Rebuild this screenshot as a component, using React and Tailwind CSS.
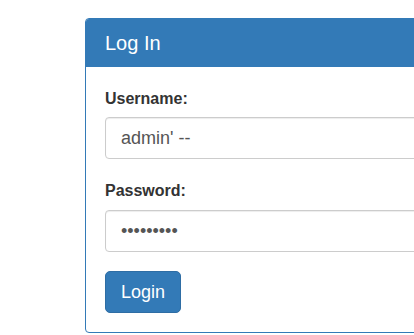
export default function App() {
  return (
    <div className="w-[414px] h-[335px] overflow-hidden bg-white" style={{ fontFamily: '"Liberation Sans", Arial, sans-serif' }}>
      <div className="pt-[18px] pl-[85px]">
        {/* Panel */}
        <div className="w-[400px] rounded-[4px] border border-[#337ab7] bg-white">
          <div className="h-[48px] flex items-center px-[19px] bg-[#337ab7] border-b border-[#337ab7] rounded-t-[3px]">
            <h3 className="text-[20px] leading-none text-white font-normal">Log In</h3>
          </div>
          <div className="px-[19px] pt-[20px] pb-[19px]">
            <label className="block text-[16px] leading-[23px] font-bold text-[#333]">Username:</label>
            <input
              readOnly
              value="admin' --"
              className="mt-[7px] block w-[340px] h-[42px] px-[15px] text-[18px] text-[#555] border border-[#ccc] rounded-[4px] shadow-[inset_0_1px_1px_rgba(0,0,0,0.075)] outline-none"
            />
            <label className="block mt-[20px] text-[16px] leading-[23px] font-bold text-[#333]">Password:</label>
            <input
              readOnly
              type="password"
              value="123456789"
              className="mt-[8px] block w-[340px] h-[42px] px-[15px] text-[18px] text-[#555] border border-[#ccc] rounded-[4px] shadow-[inset_0_1px_1px_rgba(0,0,0,0.075)] outline-none"
            />
            <button className="mt-[19px] h-[42px] px-[15px] text-[18px] text-white bg-[#337ab7] border border-[#2e6da4] rounded-[5px]">
              Login
            </button>
          </div>
        </div>
      </div>
    </div>
  );
}
